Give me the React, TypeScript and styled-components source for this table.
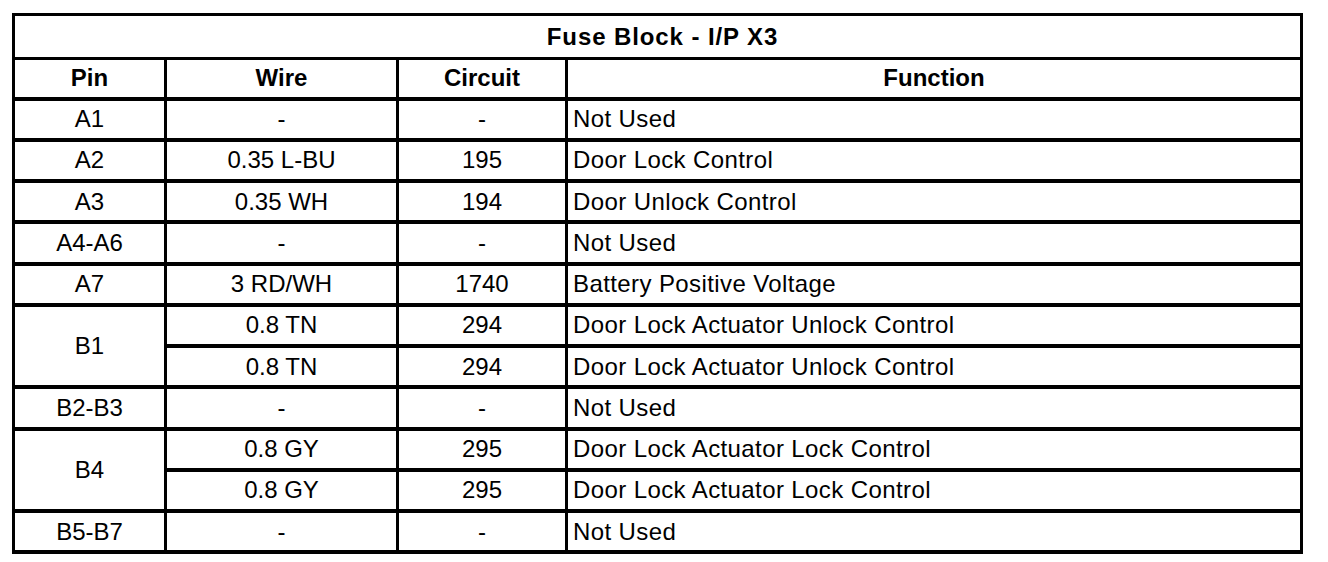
import React from 'react';
import styled, { createGlobalStyle } from 'styled-components';

type Row = {
  pin?: string;
  span?: number;
  wire: string;
  circuit: string;
  fn: string;
};

const rows: Row[] = [
  { pin: 'A1', wire: '-', circuit: '-', fn: 'Not Used' },
  { pin: 'A2', wire: '0.35 L-BU', circuit: '195', fn: 'Door Lock Control' },
  { pin: 'A3', wire: '0.35 WH', circuit: '194', fn: 'Door Unlock Control' },
  { pin: 'A4-A6', wire: '-', circuit: '-', fn: 'Not Used' },
  { pin: 'A7', wire: '3 RD/WH', circuit: '1740', fn: 'Battery Positive Voltage' },
  { pin: 'B1', span: 2, wire: '0.8 TN', circuit: '294', fn: 'Door Lock Actuator Unlock Control' },
  { wire: '0.8 TN', circuit: '294', fn: 'Door Lock Actuator Unlock Control' },
  { pin: 'B2-B3', wire: '-', circuit: '-', fn: 'Not Used' },
  { pin: 'B4', span: 2, wire: '0.8 GY', circuit: '295', fn: 'Door Lock Actuator Lock Control' },
  { wire: '0.8 GY', circuit: '295', fn: 'Door Lock Actuator Lock Control' },
  { pin: 'B5-B7', wire: '-', circuit: '-', fn: 'Not Used' },
];

const App = () => {
  return (
    <Page>
      <GlobalStyle />
      <Table>
        <colgroup>
          <col style={{ width: 152 }} />
          <col style={{ width: 232 }} />
          <col style={{ width: 169 }} />
          <col style={{ width: 735 }} />
        </colgroup>
        <thead>
          <TitleRow>
            <TitleCell colSpan={4}>Fuse Block - I/P X3</TitleCell>
          </TitleRow>
          <HeaderRow>
            <HeadCell>Pin</HeadCell>
            <HeadCell>Wire</HeadCell>
            <HeadCell>Circuit</HeadCell>
            <HeadCell>Function</HeadCell>
          </HeaderRow>
        </thead>
        <tbody>
          {rows.map((r, i) => (
            <DataRow key={i}>
              {r.pin && <Cell rowSpan={r.span}>{r.pin}</Cell>}
              <Cell>{r.wire}</Cell>
              <Cell>{r.circuit}</Cell>
              <Cell $left>{r.fn}</Cell>
            </DataRow>
          ))}
        </tbody>
      </Table>
    </Page>
  );
};

const GlobalStyle = createGlobalStyle`
  html, body {
    margin: 0;
    padding: 0;
    background: #FFFFFF;
  }
`;

const Page = styled.div`
  width: 1328px;
  height: 562px;
  padding: 13px 0 0 12px;
  box-sizing: border-box;
  background: #FFFFFF;
  font-family: 'Liberation Sans', Arial, sans-serif;
  color: #000000;
`;

const Table = styled.table`
  width: 1288px;
  table-layout: fixed;
  border-collapse: collapse;
  border: 3px solid #000000;
  border-bottom-width: 4px;
`;

const TitleRow = styled.tr`
  height: 44px;
`;

const HeaderRow = styled.tr`
  height: 40px;
  border-bottom: 4px solid #000000;
`;

const DataRow = styled.tr`
  height: 41.25px;
`;

const HeadCell = styled.th`
  border: 3px solid #000000;
  padding: 0;
  font-size: 24px;
  font-weight: 700;
  text-align: center;
  vertical-align: middle;
`;

const TitleCell = styled(HeadCell)`
  padding-left: 10px;
  letter-spacing: 0.9px;
`;

const Cell = styled.td<{ $left?: boolean }>`
  border: 3px solid #000000;
  border-bottom-width: 4px;
  padding: ${p => (p.$left ? '0 0 0 5px' : '0')};
  font-size: 24px;
  letter-spacing: ${p => (p.$left ? '0.4px' : '0')};
  text-align: ${p => (p.$left ? 'left' : 'center')};
  vertical-align: middle;
  white-space: nowrap;
`;

export default App;
